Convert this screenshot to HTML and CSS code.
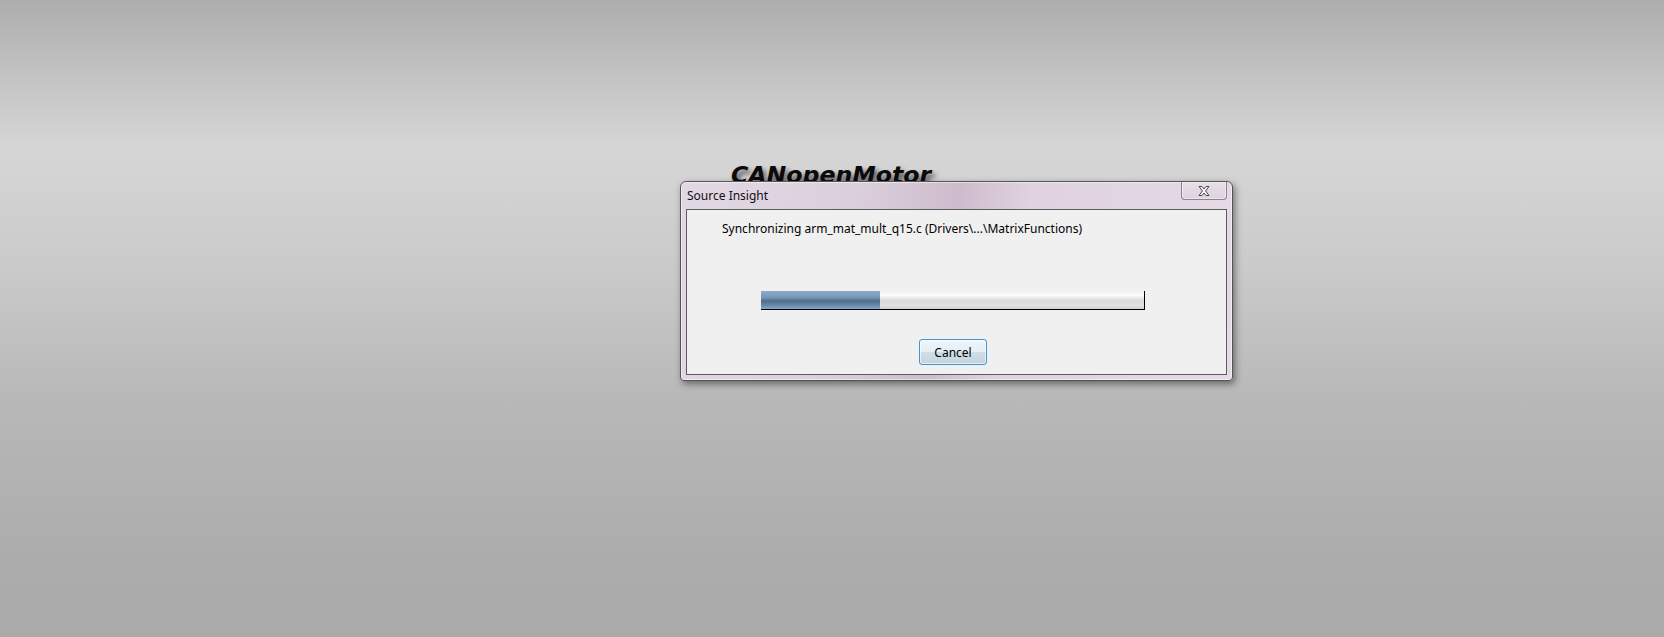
FILE: index.html
```html
<!DOCTYPE html>
<html lang="en-US">
  <head>
    <meta charset="utf-8">
    <title>Source Insight</title>
    <link rel="stylesheet" href="styles.css">
  </head>
  <body>
    <div class="desktop">
      <h1 class="appTitle">CANopenMotor</h1>

      <div class="dialog">
        <div class="titleBar">
          <span class="caption">Source Insight</span>
          <div class="closeBtn">
            <svg width="16" height="12" viewBox="0 0 16 12">
              <path d="M3 1.5 L6 1.5 L8 4 L10 1.5 L13 1.5 L9.6 6 L13 10.5 L10 10.5 L8 8 L6 10.5 L3 10.5 L6.4 6 Z" fill="#f4f4f4" stroke="#4a4a52" stroke-width="1" stroke-linejoin="round"/>
            </svg>
          </div>
        </div>

        <div class="panel">
          <p class="message">Synchronizing arm_mat_mult_q15.c (Drivers\...\MatrixFunctions)</p>
          <div class="progress">
            <div class="progressFill" style="width: 31%;"></div>
          </div>
          <button class="cancelBtn">Cancel</button>
        </div>
      </div>
    </div>
  </body>
</html>
```

FILE: styles.css
```css
html {
  font-family: "Noto Sans", "Open Sans", sans-serif;
}

body {
  margin: 0;
}

.desktop {
  height: 637px;
  box-sizing: border-box;
  padding: 164px 0 0 680px;
  background: linear-gradient(to bottom, #adadad 0px, #c4c4c4 80px, #d6d6d6 148px, #cbcbcb 260px, #b8b8b8 400px, #acacac 560px, #aaaaaa 637px);
}

.appTitle {
  margin: 0 0 -6px 51px;
  font-family: "DejaVu Sans", Verdana, sans-serif;
  font-size: 23.6px;
  line-height: 23px;
  font-weight: bold;
  font-style: italic;
  color: #0a0a0a;
  text-shadow: 3px 4px 5px rgba(0, 0, 0, 0.6);
}

.dialog {
  position: relative;
  width: 553px;
  height: 200px;
  box-sizing: border-box;
  border: 1px solid #55525a;
  border-radius: 6px 6px 4px 4px;
  background: linear-gradient(100deg, #e2d8e4 0%, #dccfdc 30%, #cdbccd 48%, #e0d2e0 60%, #e6dae6 100%);
  box-shadow: 2px 3px 7px rgba(0, 0, 0, 0.45), inset 0 0 0 1px rgba(255, 255, 255, 0.5);
  display: flex;
  flex-direction: column;
}

.titleBar {
  height: 27px;
  display: flex;
  justify-content: space-between;
  align-items: flex-start;
  padding: 0 5px 0 6px;
}

.caption {
  font-size: 12px;
  line-height: 16px;
  margin-top: 6px;
  color: #111;
}

.closeBtn {
  width: 44px;
  height: 17px;
  border: 1px solid #8c8290;
  border-top: none;
  border-radius: 0 0 4px 4px;
  background: linear-gradient(to bottom, #e8dfe8, #ddd2de);
  box-shadow: inset 0 0 0 1px rgba(255, 255, 255, 0.45);
  display: flex;
  justify-content: center;
  align-items: center;
}

.panel {
  flex: 1;
  margin: 0 5px 5px 5px;
  border: 1px solid #5e5a62;
  background-color: #f0f0f0;
  padding: 11px 0 0 0;
}

.message {
  margin: 0 0 0 35px;
  font-size: 12px;
  line-height: 16px;
  color: #000;
}

.progress {
  margin: 54px 0 0 74px;
  width: 384px;
  height: 19px;
  box-sizing: border-box;
  border-right: 1px solid #000;
  border-bottom: 1px solid #000;
  background: linear-gradient(to bottom, #f2f2f2 0%, #fbfbfb 25%, #d9d9d9 55%, #e2e2e2 80%, #d0d0d0 100%);
  display: flex;
}

.progressFill {
  height: 100%;
  background: linear-gradient(to bottom, #8eabc9 0%, #7896b6 35%, #4f6e8e 55%, #6686a8 78%, #89a7c6 100%);
}

.cancelBtn {
  display: block;
  margin: 29px 0 0 232px;
  width: 68px;
  height: 26px;
  border: 1px solid #3c9ad2;
  border-radius: 3px;
  background: linear-gradient(to bottom, #eef6fb 0%, #e4eef5 50%, #cfdde7 52%, #c4d4e0 100%);
  box-shadow: inset 0 0 0 1px rgba(255, 255, 255, 0.6);
  font-family: "Noto Sans", "Open Sans", sans-serif;
  font-size: 12px;
  color: #000;
  padding: 0;
}
```
